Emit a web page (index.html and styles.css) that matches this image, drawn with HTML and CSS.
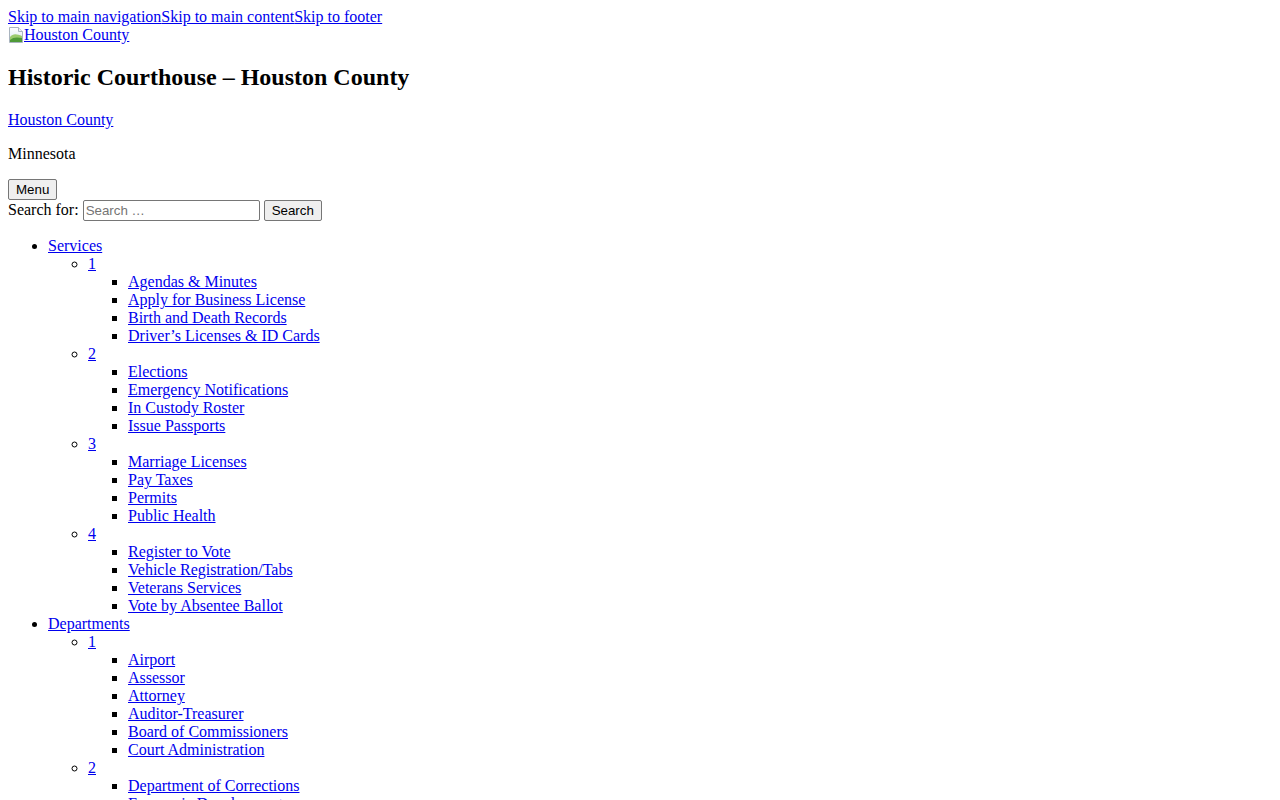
FILE: index.html
```html
<!DOCTYPE html>
<html lang="en">
  <head>
    <meta charset="UTF-8" />
    <meta name="viewport" content="width=device-width, initial-scale=1.0" />
    <title>Historic Courthouse – Houston County</title>
    <link rel="stylesheet" href="styles.css">
  </head>
  <body>
    <div class="skip-links">
      <a href="#main-nav">Skip to main navigation</a><a href="#main">Skip to main content</a><a href="#footer">Skip to footer</a>
    </div>

    <header class="site-header">
      <div class="logo">
        <a href="#">
          <svg class="broken-img" width="16" height="16" viewBox="0 0 16 16" aria-hidden="true">
            <defs>
              <linearGradient id="sky" x1="0" y1="0" x2="0" y2="1">
                <stop offset="0" stop-color="#ffffff" />
                <stop offset="1" stop-color="#d8e6f2" />
              </linearGradient>
            </defs>
            <path d="M1.5 0.5h9l4 4v11h-13z" fill="url(#sky)" stroke="#a9b4bf" />
            <path d="M2 10c3-4 7-3 12-1v6H2z" fill="#9ccb6e" />
            <path d="M2 13c3-3 7-3 12-2v4H2z" fill="#4f9a38" />
            <path d="M10.5 0.5v4h4" fill="#eef2f5" stroke="#a9b4bf" />
          </svg>Houston County</a>
      </div>
      <h2>Historic Courthouse – Houston County</h2>
      <p><a href="#">Houston County</a></p>
      <p>Minnesota</p>
      <button type="button" class="menu-toggle">Menu</button>
      <form class="search-form" action="#">
        <label for="s">Search for:</label>
        <input type="search" id="s" placeholder="Search …" />
        <button type="submit">Search</button>
      </form>
    </header>

    <nav id="main-nav">
      <ul>
        <li>
          <a href="#">Services</a>
          <ul>
            <li>
              <a href="#">1</a>
              <ul>
                <li><a href="#">Agendas &amp; Minutes</a></li>
                <li><a href="#">Apply for Business License</a></li>
                <li><a href="#">Birth and Death Records</a></li>
                <li><a href="#">Driver’s Licenses &amp; ID Cards</a></li>
              </ul>
            </li>
            <li>
              <a href="#">2</a>
              <ul>
                <li><a href="#">Elections</a></li>
                <li><a href="#">Emergency Notifications</a></li>
                <li><a href="#">In Custody Roster</a></li>
                <li><a href="#">Issue Passports</a></li>
              </ul>
            </li>
            <li>
              <a href="#">3</a>
              <ul>
                <li><a href="#">Marriage Licenses</a></li>
                <li><a href="#">Pay Taxes</a></li>
                <li><a href="#">Permits</a></li>
                <li><a href="#">Public Health</a></li>
              </ul>
            </li>
            <li>
              <a href="#">4</a>
              <ul>
                <li><a href="#">Register to Vote</a></li>
                <li><a href="#">Vehicle Registration/Tabs</a></li>
                <li><a href="#">Veterans Services</a></li>
                <li><a href="#">Vote by Absentee Ballot</a></li>
              </ul>
            </li>
          </ul>
        </li>
        <li>
          <a href="#">Departments</a>
          <ul>
            <li>
              <a href="#">1</a>
              <ul>
                <li><a href="#">Airport</a></li>
                <li><a href="#">Assessor</a></li>
                <li><a href="#">Attorney</a></li>
                <li><a href="#">Auditor-Treasurer</a></li>
                <li><a href="#">Board of Commissioners</a></li>
                <li><a href="#">Court Administration</a></li>
              </ul>
            </li>
            <li>
              <a href="#">2</a>
              <ul>
                <li><a href="#">Department of Corrections</a></li>
                <li><a href="#">Economic Development</a></li>
                <li><a href="#">Emergency Management</a></li>
                <li><a href="#">Environmental Services</a></li>
              </ul>
            </li>
          </ul>
        </li>
      </ul>
    </nav>
  </body>
</html>
```

FILE: styles.css
```css
/* Plain document look */
body {
  margin: 8px;
  font-family: "Liberation Serif", "Times New Roman", serif;
  font-size: 16px;
  color: #000;
  background: #fff;
}

a {
  color: #0000ee;
}

/* Header */
.broken-img {
  vertical-align: -3px;
}

h2 {
  font-size: 24px;
  margin: 20px 0;
}

p {
  margin: 16px 0;
}

button,
input {
  font-family: "Liberation Sans", Arial, sans-serif;
  font-size: 13.33px;
}

button {
  box-sizing: border-box;
  height: 21px;
  padding: 1px 7px;
  border: 1px solid #767676;
  border-radius: 2px;
  background: #efefef;
  color: #000;
}

.search-form input {
  box-sizing: border-box;
  width: 177px;
  height: 21px;
  padding: 1px 2px;
  border: 1px solid #767676;
  border-radius: 2px;
}

.search-form input::placeholder {
  color: #757575;
}

/* Nav lists */
ul {
  margin: 16px 0;
  padding-left: 40px;
}

ul ul {
  margin: 0;
  list-style-type: circle;
}

ul ul ul {
  list-style-type: square;
}
```
